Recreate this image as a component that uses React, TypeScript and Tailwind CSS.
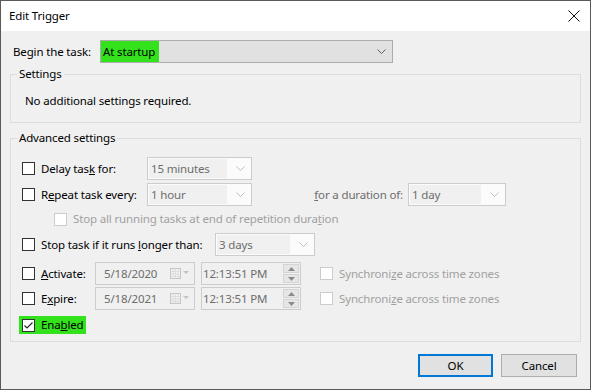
import React from "react";

const font = { fontFamily: '"Noto Sans", "Segoe UI", sans-serif', letterSpacing: "-0.15px" };

function Chevron({ color = "#606060" }: { color?: string }) {
  return (
    <svg width="9" height="5" viewBox="0 0 9 5">
      <path d="M0.5 0.5 L4.5 4.5 L8.5 0.5" fill="none" stroke={color} strokeWidth="1" />
    </svg>
  );
}

function Check({ checked = false, disabled = false }: { checked?: boolean; disabled?: boolean }) {
  return (
    <div
      className={
        "w-[13px] h-[13px] shrink-0 border flex items-center justify-center " +
        (disabled ? "border-[#cccccc] bg-white" : "border-[#333333] bg-white")
      }
    >
      {checked && (
        <svg width="11" height="11" viewBox="0 0 11 11">
          <path d="M1.5 5.5 L4 8 L9.5 2.5" fill="none" stroke="#222" strokeWidth="1.1" />
        </svg>
      )}
    </div>
  );
}

function DisabledCombo({ text, w }: { text: string; w: string }) {
  return (
    <div className={"h-[23px] shrink-0 border border-[#cccccc] bg-[#fbfbfb] flex items-center pl-[1px] pr-[6px] " + w}>
      <div className="flex-1 h-[19px] bg-[#f0f0f0] flex items-center pl-[2px] text-[#6d6d6d] mr-[9px] whitespace-nowrap">{text}</div>
      <Chevron color="#bfbfbf" />
    </div>
  );
}

function CalIcon() {
  return (
    <svg width="20" height="11" viewBox="0 0 20 11">
      <rect x="0.5" y="0.5" width="10" height="10" fill="#f4f4f4" stroke="#c4c4c4" />
      <path d="M0.5 3.5 H10.5 M0.5 6 H10.5 M0.5 8.5 H10.5 M3 0.5 V10.5 M5.5 0.5 V10.5 M8 0.5 V10.5" stroke="#d8d8d8" strokeWidth="0.8" />
      <path d="M13 3 L19 3 L16 6 Z" fill="#c4c4c4" />
    </svg>
  );
}

function DateBox({ text }: { text: string }) {
  return (
    <div className="w-[100px] h-[23px] shrink-0 border border-[#cccccc] bg-[#f0f0f0] flex items-center pl-[8px] pr-[4px] text-[#6d6d6d]">
      <span className="flex-1 whitespace-nowrap">{text}</span>
      <CalIcon />
    </div>
  );
}

function TimeBox({ text }: { text: string }) {
  return (
    <div className="w-[100px] h-[23px] shrink-0 border border-[#cccccc] bg-[#f0f0f0] flex items-center pl-[1px] pr-[1px] text-[#6d6d6d]">
      <span className="flex-1 whitespace-nowrap">{text}</span>
      <div className="w-[16px] h-[19px] flex flex-col gap-[1px]">
        <div className="flex-1 bg-[#e6e6e6] border border-[#d4d4d4] flex items-center justify-center">
          <svg width="7" height="4" viewBox="0 0 7 4"><path d="M0 4 L3.5 0 L7 4 Z" fill="#8a8a8a" /></svg>
        </div>
        <div className="flex-1 bg-[#e6e6e6] border border-[#d4d4d4] flex items-center justify-center">
          <svg width="7" height="4" viewBox="0 0 7 4"><path d="M0 0 L3.5 4 L7 0 Z" fill="#8a8a8a" /></svg>
        </div>
      </div>
    </div>
  );
}

export default function App() {
  return (
    <div
      className="w-[591px] h-[390px] border border-[#5a5a5a] bg-[#f0f0f0] text-[11.5px] leading-[16px] text-black overflow-hidden"
      style={font}
    >
      {/* title bar */}
      <div className="h-[30px] bg-white flex items-center justify-between pl-[8px] pr-[10px]">
        <span className="text-[11.5px]">Edit Trigger</span>
        <svg width="12" height="12" viewBox="0 0 12 12">
          <path d="M0.5 0.5 L11.5 11.5 M11.5 0.5 L0.5 11.5" stroke="#111" strokeWidth="1" />
        </svg>
      </div>

      <div className="px-[9px]">
        {/* begin row */}
        <div className="mt-[9px] flex items-center h-[23px]">
          <span className="w-[90px] pl-[3px] whitespace-nowrap">Begin the task:</span>
          <div className="w-[293px] h-[23px] border border-[#adadad] bg-[#e1e1e1] flex items-center pr-[6px]">
            <div className="h-[21px] bg-[#33e11d] flex items-center pl-[2px] pr-[4px] whitespace-nowrap">At startup</div>
            <div className="flex-1" />
            <Chevron />
          </div>
        </div>

        {/* settings */}
        <div className="relative mt-[11px] h-[49px] border border-[#dcdcdc]">
          <span className="absolute left-[6px] top-[-9px] px-[2px] bg-[#f0f0f0] whitespace-nowrap">Settings</span>
          <div className="pl-[14px] pt-[18px] whitespace-nowrap">No additional settings required.</div>
        </div>

        {/* advanced */}
        <div className="relative mt-[15px] h-[204px] border border-[#dcdcdc] pl-[11px]">
          <span className="absolute left-[6px] top-[-9px] px-[2px] bg-[#f0f0f0] whitespace-nowrap">Advanced settings</span>

          <div className="mt-[18px] h-[23px] flex items-center">
            <Check />
            <span className="ml-[6px] w-[106px] shrink-0 whitespace-nowrap">
              Delay tas<u>k</u> for:
            </span>
            <DisabledCombo text="15 minutes" w="w-[105px]" />
          </div>

          <div className="mt-[3px] h-[23px] flex items-center">
            <Check />
            <span className="ml-[6px] w-[106px] shrink-0 whitespace-nowrap">
              R<u>e</u>peat task every:
            </span>
            <DisabledCombo text="1 hour" w="w-[105px]" />
            <span className="w-[156px] shrink-0 pr-[5px] text-right text-[#6d6d6d] whitespace-nowrap">
              <u>f</u>or a duration of:
            </span>
            <DisabledCombo text="1 day" w="w-[98px]" />
          </div>

          <div className="mt-[3px] h-[20px] flex items-center pl-[32px]">
            <Check disabled />
            <span className="ml-[6px] text-[#a0a0a0] whitespace-nowrap">
              Stop all running tasks at end of repetition dura<u>t</u>ion
            </span>
          </div>

          <div className="mt-[4px] h-[23px] flex items-center">
            <Check />
            <span className="ml-[6px] w-[174px] shrink-0 whitespace-nowrap">
              Stop task if it runs <u>l</u>onger than:
            </span>
            <DisabledCombo text="3 days" w="w-[100px]" />
          </div>

          <div className="mt-[6px] h-[23px] flex items-center">
            <Check />
            <span className="ml-[6px] w-[54px] shrink-0 whitespace-nowrap">
              <u>A</u>ctivate:
            </span>
            <DateBox text="5/18/2020" />
            <div className="ml-[6px]">
              <TimeBox text="12:13:51 PM" />
            </div>
            <div className="ml-[19px] flex items-center">
              <Check disabled />
              <span className="ml-[6px] text-[#a0a0a0] whitespace-nowrap">
                Synchroni<u>z</u>e across time zones
              </span>
            </div>
          </div>

          <div className="mt-[2px] h-[23px] flex items-center">
            <Check />
            <span className="ml-[6px] w-[54px] shrink-0 whitespace-nowrap">
              E<u>x</u>pire:
            </span>
            <DateBox text="5/18/2021" />
            <div className="ml-[6px]">
              <TimeBox text="12:13:51 PM" />
            </div>
            <div className="ml-[19px] flex items-center">
              <Check disabled />
              <span className="ml-[6px] text-[#a0a0a0] whitespace-nowrap">
                Synchroni<u>z</u>e across time zones
              </span>
            </div>
          </div>

          <div className="mt-[6px] h-[18px] flex">
            <div className="ml-[-3px] h-[18px] bg-[#33e11d] flex items-center pl-[3px] pr-[2px]">
              <Check checked />
              <span className="ml-[6px] whitespace-nowrap">
                Ena<u>b</u>led
              </span>
            </div>
          </div>
        </div>

        {/* buttons */}
        <div className="mt-[12px] flex justify-end gap-[8px] pr-[4px]">
          <button className="w-[75px] h-[23px] border-2 border-[#0078d7] bg-[#e1e1e1]">OK</button>
          <button className="w-[76px] h-[23px] border border-[#adadad] bg-[#e1e1e1]">Cancel</button>
        </div>
      </div>
    </div>
  );
}
